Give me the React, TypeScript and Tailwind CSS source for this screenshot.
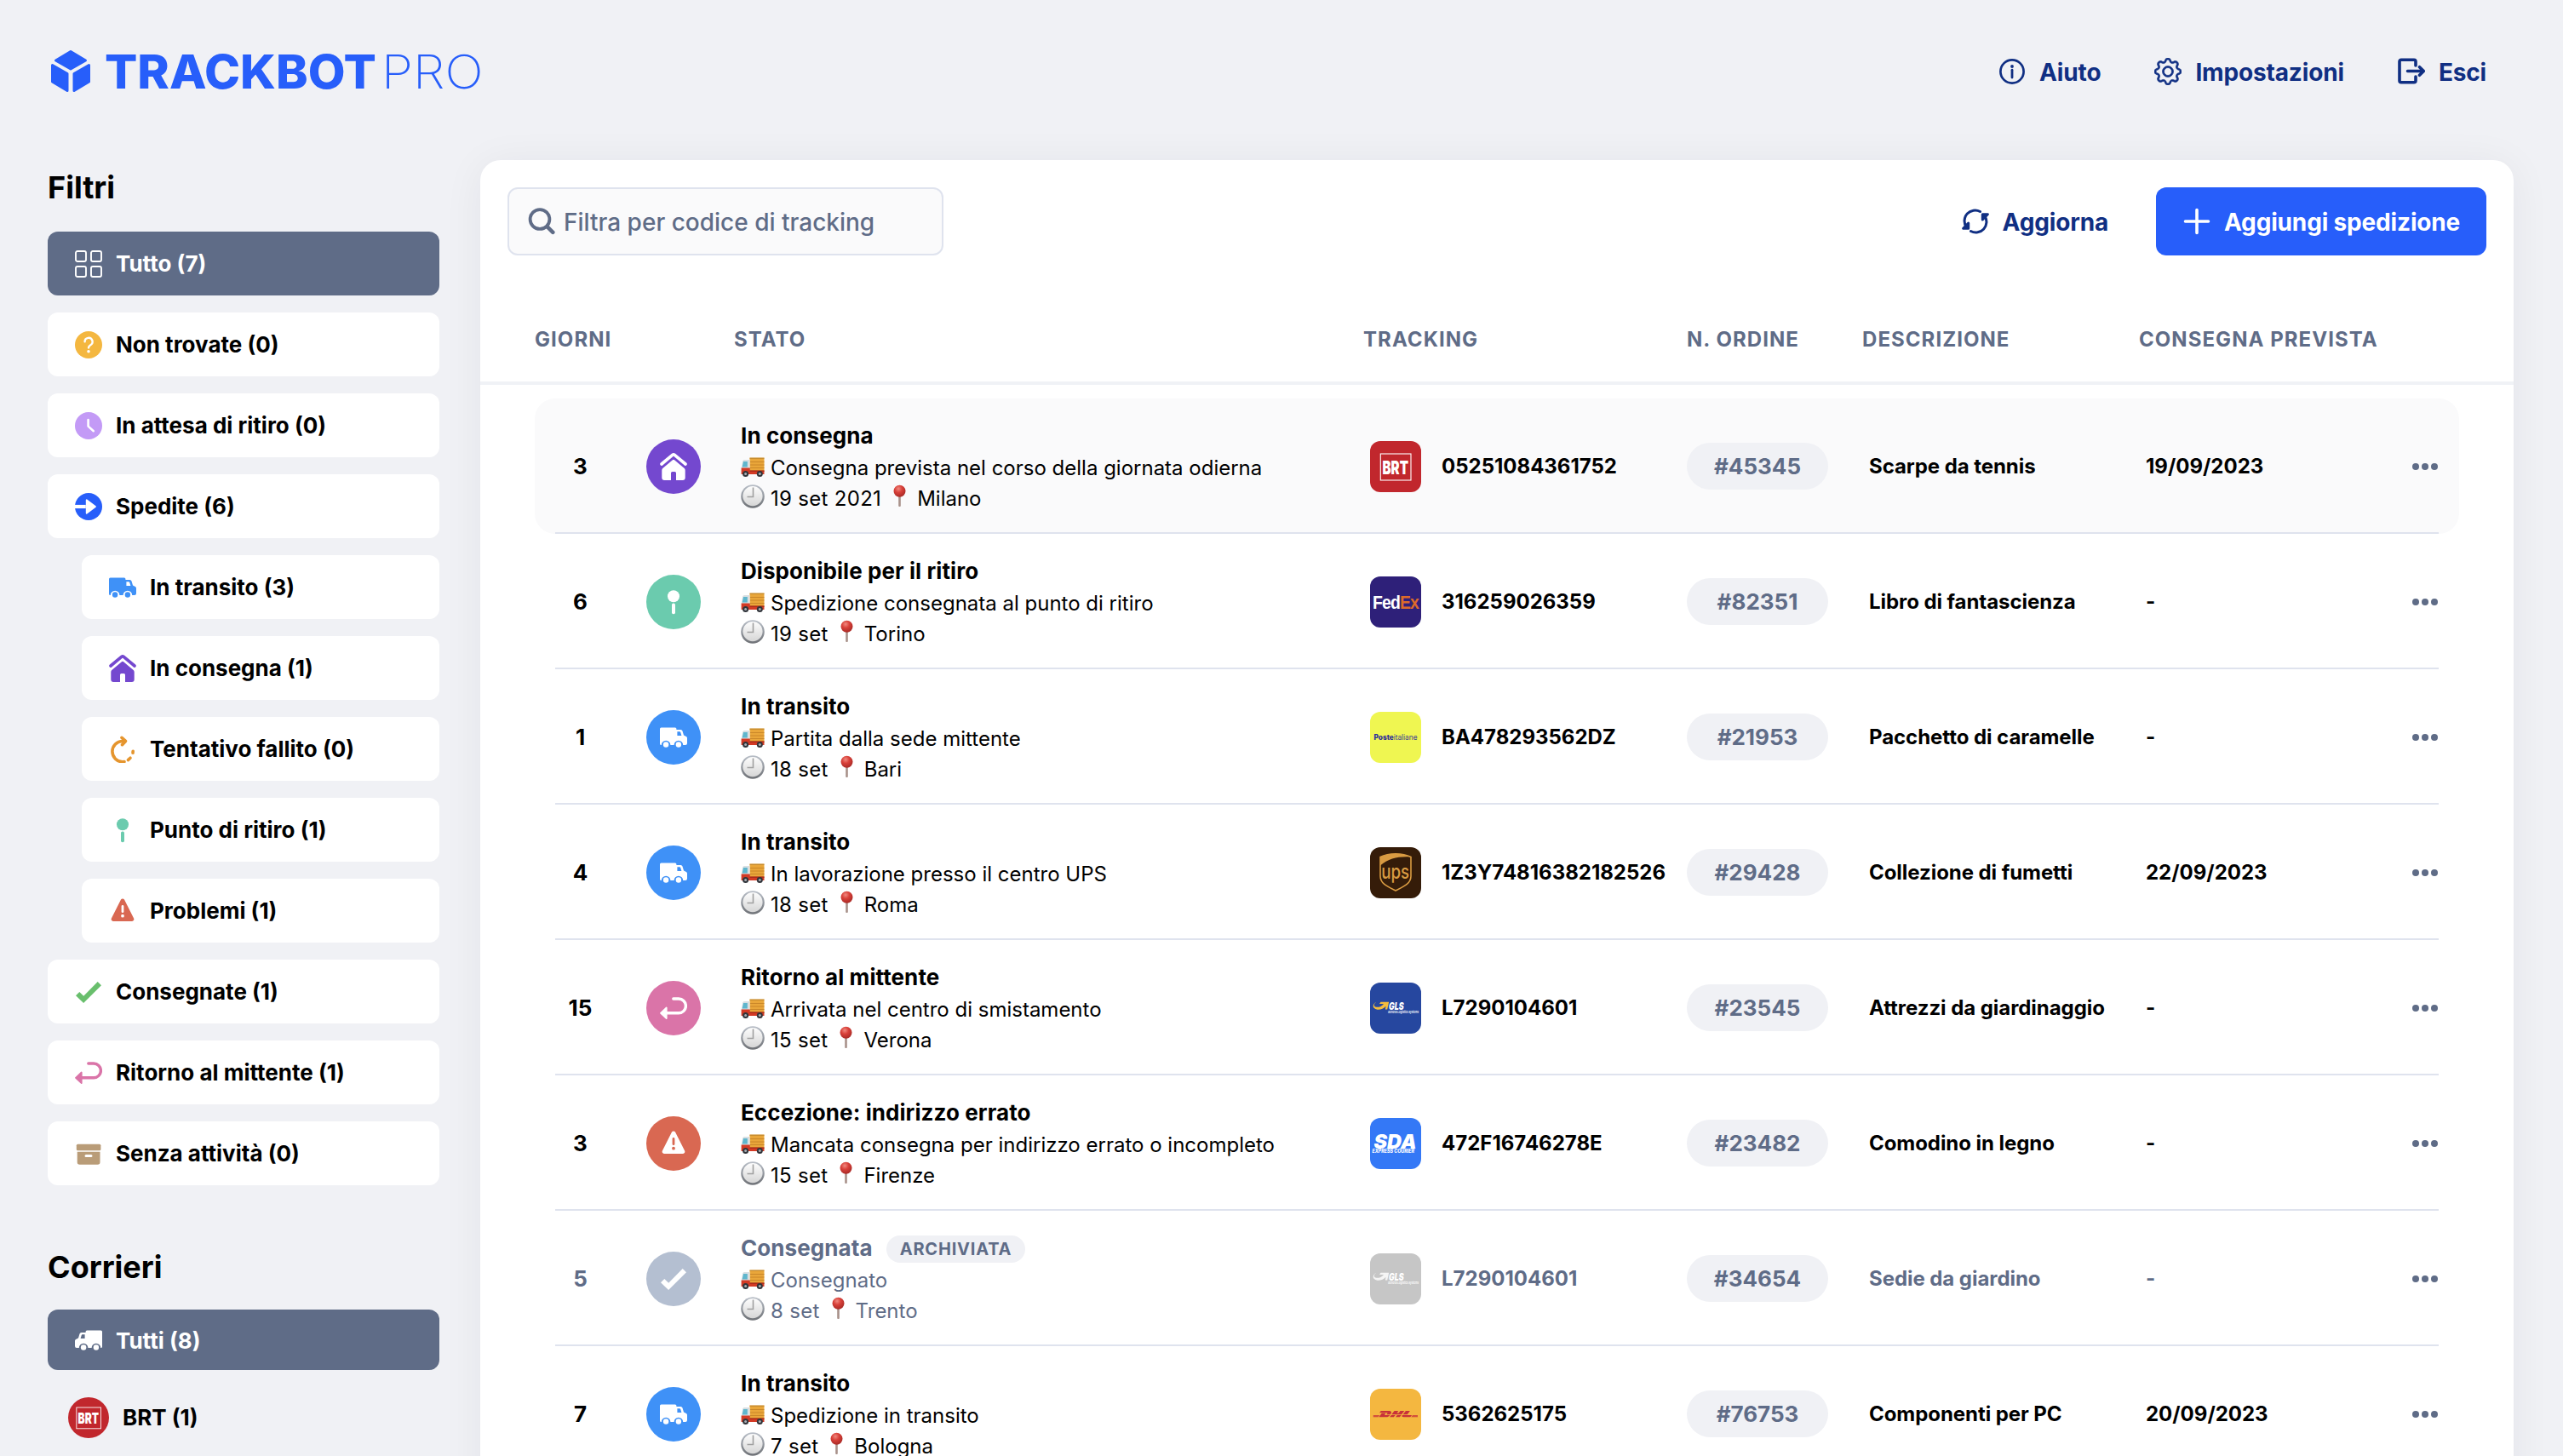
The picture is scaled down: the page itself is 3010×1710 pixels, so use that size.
import React from "react";
import { BsGear } from "react-icons/bs";
import { SiDhl } from "react-icons/si";

interface IconProps {
  className?: string;
}

interface Filtro {
  label: string;
  icon: React.ReactNode;
  active?: boolean;
  nested?: boolean;
}

interface Spedizione {
  giorni: number;
  tipo: "transito" | "consegna" | "ritiro" | "ritorno" | "problema" | "archiviata";
  titolo: string;
  dettaglio: string;
  data: string;
  luogo: string;
  corriere: keyof typeof corrieri;
  tracking: string;
  ordine: string;
  descrizione: string;
  prevista: string;
}

/* ---------- Icone stato ---------- */

const TruckIcon = ({ className = "" }: IconProps) => (
  <svg viewBox="0 0 32 32" className={`w-8 h-8 shrink-0 ${className}`} fill="currentColor">
    <path
      fillRule="evenodd"
      d="M1.5 4.4h16.4a1.5 1.5 0 0 1 1.5 1.5V7h5a2.2 2.2 0 0 1 2.1 1.6l1.5 5 2.9 1.5A2 2 0 0 1 32 16.9V23a2 2 0 0 1-2 2h-2.8a5.3 5.3 0 0 0-10.6 0h-4.2a5.3 5.3 0 0 0-10.6 0H1.5A1.5 1.5 0 0 1 0 23.5V5.9a1.5 1.5 0 0 1 1.5-1.5zM20.4 9.2v4.7h5l-1.2-4a1 1 0 0 0-1-.7z"
    />
    <circle cx="7.1" cy="24.5" r="3.2" />
    <circle cx="21.9" cy="24.5" r="3.2" />
  </svg>
);

const HouseIcon = ({ className = "" }: IconProps) => (
  <svg viewBox="0 0 32 32" className={`w-8 h-8 shrink-0 ${className}`} fill="currentColor">
    <path
      d="M2 13 15 2.2a1.7 1.7 0 0 1 2 0L30 13"
      fill="none"
      stroke="currentColor"
      strokeWidth="3.6"
      strokeLinecap="round"
      strokeLinejoin="round"
    />
    <path d="M14.9 8.2a1.7 1.7 0 0 1 2.2 0l11.6 9.9a3 3 0 0 1 1 2.3V29a3 3 0 0 1-3 3H19v-8.5a1.5 1.5 0 0 0-1.5-1.5h-3a1.5 1.5 0 0 0-1.5 1.5V32H5.3a3 3 0 0 1-3-3v-8.6a3 3 0 0 1 1-2.3z" />
  </svg>
);

const PinIcon = ({ className = "" }: IconProps) => (
  <svg viewBox="0 0 32 32" className={`w-8 h-8 shrink-0 ${className}`} fill="currentColor">
    <circle cx="16" cy="9.3" r="7" />
    <rect x="14" y="17.5" width="4" height="12.7" rx="1.8" />
  </svg>
);

const WarningIcon = ({ className = "" }: IconProps) => (
  <svg viewBox="0 0 32 32" className={`w-8 h-8 shrink-0 ${className}`} fill="currentColor">
    <path
      fillRule="evenodd"
      d="M14 2.6a2.3 2.3 0 0 1 4 0l11.1 22a2.3 2.3 0 0 1-2 3.4H4.9a2.3 2.3 0 0 1-2-3.4zM14.6 10.5v6.2a1.4 1.4 0 0 0 2.8 0v-6.2a1.4 1.4 0 0 0-2.8 0zM16 19.8a1.9 1.9 0 1 0 0 3.8 1.9 1.9 0 0 0 0-3.8z"
    />
  </svg>
);

const ReturnIcon = ({ className = "" }: IconProps) => (
  <svg viewBox="0 0 32 32" className={`w-8 h-8 shrink-0 ${className}`} fill="none">
    <path d="M15.8 5H22a8.4 8.4 0 0 1 0 16.8H7" stroke="currentColor" strokeWidth="3.4" strokeLinecap="round" />
    <path d="M1 21.8 7.7 15.5v12.6z" fill="currentColor" stroke="currentColor" strokeWidth="1.8" strokeLinejoin="round" />
  </svg>
);

const CheckIcon = ({ className = "" }: IconProps) => (
  <svg viewBox="0 0 32 32" className={`w-8 h-8 shrink-0 ${className}`} fill="currentColor">
    <path d="M1 20.2 5.3 16l4.9 4.7L26.7 4 31 8.3 10.1 29z" />
  </svg>
);

const GridIcon = () => (
  <svg viewBox="0 0 32 32" className="w-8 h-8 shrink-0" fill="none" stroke="currentColor" strokeWidth="1.9">
    <rect x="1" y="1" width="12" height="12" rx="2" />
    <rect x="19" y="1" width="12" height="12" rx="2" />
    <rect x="1" y="19" width="12" height="12" rx="2" />
    <rect x="19" y="19" width="12" height="12" rx="2" />
  </svg>
);

const QuestionIcon = () => (
  <svg viewBox="0 0 32 32" className="w-8 h-8 shrink-0" fill="none">
    <circle cx="16" cy="16" r="16" fill="#f4b740" />
    <path
      d="M11.6 12.3a4.5 4.5 0 1 1 6.7 3.9c-1.5.9-2.3 1.6-2.3 3.2"
      stroke="#fff"
      strokeWidth="2.4"
      strokeLinecap="round"
    />
    <circle cx="16" cy="23.7" r="1.8" fill="#fff" />
  </svg>
);

const ClockIcon = () => (
  <svg viewBox="0 0 32 32" className="w-8 h-8 shrink-0" fill="none">
    <circle cx="16" cy="16" r="16" fill="#c39af6" />
    <path d="M15.6 9v7.6l6.2 5.6" stroke="#fff" strokeWidth="2.6" strokeLinecap="round" strokeLinejoin="round" />
  </svg>
);

const ArrowCircleIcon = () => (
  <svg viewBox="0 0 32 32" className="w-8 h-8 shrink-0" fill="none">
    <circle cx="16" cy="16" r="16" fill="#275efa" />
    <path d="M0 13.9h12.8v4.2H0z" fill="#fff" />
    <path d="M13.7 8.2v15.6L24 16z" fill="#fff" stroke="#fff" strokeWidth="1.8" strokeLinejoin="round" />
  </svg>
);

const RetryIcon = () => (
  <svg viewBox="0 0 32 32" className="w-8 h-8 shrink-0" fill="none" stroke="#e5952e" strokeWidth="3.6" strokeLinecap="round" strokeLinejoin="round">
    <path d="M19 6.5h-3a12.1 12.1 0 0 0 0 24.2l2-.2" />
    <path d="M15 2.3 19.5 6.4 15.5 10.7" />
    <path d="M22.4 28.6 25 26.2M28 20.2l.2-2" />
  </svg>
);

const BoxIcon = () => (
  <svg viewBox="0 0 32 32" className="w-8 h-8 shrink-0" fill="#b99c78">
    <rect x="1.8" y="4.8" width="28.6" height="7.5" rx="1.5" />
    <path fillRule="evenodd" d="M2.7 13.7h26.8V26a2.8 2.8 0 0 1-2.8 2.8H5.5A2.8 2.8 0 0 1 2.7 26zM13 17.1a1.5 1.5 0 0 0 0 3h6a1.5 1.5 0 0 0 0-3z" />
  </svg>
);

/* ---------- Icone barra superiore ---------- */

const InfoIcon = () => (
  <svg viewBox="0 0 32 32" className="w-8 h-8 shrink-0" fill="none" stroke="currentColor">
    <circle cx="16" cy="16" r="13.6" strokeWidth="2.7" />
    <path d="M16 14.2V23" strokeWidth="2.8" strokeLinecap="round" />
    <circle cx="16" cy="10" r="1.9" fill="currentColor" stroke="none" />
  </svg>
);

const ExitIcon = () => (
  <svg viewBox="0 0 32 32" className="w-8 h-8 shrink-0" fill="none" stroke="currentColor" strokeWidth="3.6" strokeLinecap="round" strokeLinejoin="round">
    <path d="M21 9V4.2a2 2 0 0 0-2-2H4a2 2 0 0 0-2 2v22.6a2 2 0 0 0 2 2h15a2 2 0 0 0 2-2V22" />
    <path d="M11.5 15.5h18M25.5 10.7l4.8 4.8-4.8 4.8" />
  </svg>
);

const RefreshIcon = () => (
  <svg viewBox="0 0 32 32" className="w-8 h-8 shrink-0" fill="none" stroke="currentColor" strokeWidth="3" strokeLinecap="round" strokeLinejoin="round">
    <path d="M5.2 22.5A12.5 12.5 0 0 1 21.5 4.5" />
    <path d="M1.7 24.3h6V18z" fill="currentColor" />
    <path d="M26.8 9.5A12.5 12.5 0 0 1 10.5 27.5" />
    <path d="M30.3 7.7h-6V14z" fill="currentColor" />
  </svg>
);

const PlusIcon = () => (
  <svg viewBox="0 0 32 32" className="w-8 h-8 shrink-0" fill="none" stroke="currentColor" strokeWidth="3.6" strokeLinecap="round">
    <path d="M16 2.5v27M2.5 16h27" />
  </svg>
);

const SearchIcon = () => (
  <svg viewBox="0 0 32 32" className="w-8 h-8 shrink-0" fill="none" stroke="#5f6c87" strokeLinecap="round">
    <circle cx="14" cy="13.5" r="11.4" strokeWidth="3.8" />
    <path d="m22.8 22.3 6.5 6.5" strokeWidth="4.6" />
  </svg>
);

/* ---------- Emoji ---------- */

const EmojiTruck = () => (
  <svg viewBox="0 0 28 24" className="w-7 h-6 shrink-0">
    <rect x="10.5" y=".6" width="17" height="16" fill="#e9a63a" />
    <path d="M10.5 1.2h17" stroke="#b9832c" strokeWidth="1" />
    <path d="M11 5.5h16.5M11 9h16.5M11 12.5h16.5" stroke="#c27f24" strokeWidth=".8" />
    <path d="M2.2 4.5A2 2 0 0 1 4 3h6.5v10H.8z" fill="#d9dfe2" />
    <path d="M3 5h4.8v6.5H1.6z" fill="#5fb6cd" />
    <path d="M.6 12.5h10.2v3.3h16.7V20H.6z" fill="#d33a25" />
    <path d="M10.5 15.5h17v1.2h-17z" fill="#9d2517" />
    <circle cx="5.6" cy="19.6" r="3.5" fill="#30343a" />
    <circle cx="5.6" cy="19.6" r="1.5" fill="#a9adb3" />
    <circle cx="22.3" cy="19.6" r="3.5" fill="#30343a" />
    <circle cx="22.3" cy="19.6" r="1.5" fill="#a9adb3" />
  </svg>
);

const EmojiClock = () => (
  <svg viewBox="0 0 28 28" className="w-7 h-7 shrink-0">
    <defs>
      <linearGradient id="bordoOrologio" x1="0" y1="0" x2="0" y2="1">
        <stop offset="0" stopColor="#b9bfc8" />
        <stop offset="1" stopColor="#6d7075" />
      </linearGradient>
      <linearGradient id="quadranteOrologio" x1="0" y1="0" x2="0" y2="1">
        <stop offset="0" stopColor="#fdfdfd" />
        <stop offset="1" stopColor="#d6d6d6" />
      </linearGradient>
    </defs>
    <circle cx="14" cy="14" r="13.8" fill="url(#bordoOrologio)" />
    <circle cx="14" cy="13.6" r="11.6" fill="url(#quadranteOrologio)" />
    <path d="M14.5 3.5v11h-7" fill="none" stroke="#a0a0a0" strokeWidth="1.6" />
  </svg>
);

const EmojiPin = () => (
  <svg viewBox="0 0 28 28" className="w-7 h-7 shrink-0">
    <defs>
      <radialGradient id="testaSpillo" cx=".4" cy=".3" r=".7">
        <stop offset="0" stopColor="#f08a80" />
        <stop offset=".45" stopColor="#d9413a" />
        <stop offset="1" stopColor="#a92a26" />
      </radialGradient>
    </defs>
    <rect x="13.2" y="12" width="2.6" height="14" rx="1" fill="#a8918a" />
    <circle cx="14.5" cy="7.8" r="7" fill="url(#testaSpillo)" />
  </svg>
);

/* ---------- Loghi corrieri ---------- */

const BrtMark = () => (
  <>
    <rect width="60" height="60" fill="#c1272d" />
    <rect x="12.3" y="15" width="35.7" height="31" fill="none" stroke="#fff" strokeWidth="1.1" />
    <text x="14.5" y="38.6" fontFamily="Inter, sans-serif" fontWeight="900" fontSize="22" fill="#fff" textLength="30.5" lengthAdjust="spacingAndGlyphs">
      BRT
    </text>
  </>
);

const FedexMark = () => (
  <>
    <rect width="60" height="60" fill="#2e2079" />
    <text x="3" y="37.6" fontFamily="Liberation Sans, sans-serif" fontWeight="700" fontSize="22.5" letterSpacing="-1" fill="#fff" textLength="54" lengthAdjust="spacingAndGlyphs">
      Fed<tspan fill="#dd6a2b">Ex</tspan>
    </text>
  </>
);

const PosteMark = () => (
  <>
    <rect width="60" height="60" fill="#eff651" />
    <text x="4.5" y="33" fontFamily="Inter, sans-serif" fontWeight="800" fontSize="8.5" fill="#2a2a9c" textLength="51" lengthAdjust="spacingAndGlyphs">
      Poste<tspan fontWeight="400" fill="#3c3c96">italiane</tspan>
    </text>
  </>
);

const UpsMark = () => (
  <>
    <rect width="60" height="60" fill="#351c09" />
    <path d="M12 11.5C22 6.5 38 6.5 48 11.5V34c0 9-9 12.500-18 17-9-4.500-18-8-18-17z" fill="none" stroke="#d99b42" strokeWidth="1.6" />
    <path d="M12 11.5C22 6.5 38 6.5 48 11.5 34 10.500 22 13 12 21.500z" fill="#d99b42" />
    <text x="13.2" y="37.3" fontFamily="Inter, sans-serif" fontWeight="500" fontSize="24" fill="#d99b42" textLength="33" lengthAdjust="spacingAndGlyphs">
      ups
    </text>
  </>
);

const GlsMark = ({ bg = "#26479f", accent = "#f4bd3e" }: { bg?: string; accent?: string }) => (
  <>
    <rect width="60" height="60" fill={bg} />
    <path d="M7.5 22.800C2.500 25 2 30.500 8.500 31.700c4 .4 7.500-1.400 10-4l-.6 3.800h2.300l2-8.700h-9.700l-1.500 2.100h5c-2.200 2.700-5.500 4.300-8.500 3.900-3.600-.6-3.500-3.700 0-6z" fill={accent} />
    <text x="22" y="31.8" fontFamily="Inter, sans-serif" fontWeight="900" fontStyle="italic" fontSize="12" fill="#fff" textLength="17.5" lengthAdjust="spacingAndGlyphs">
      GLS
    </text>
    <text x="21" y="36" fontFamily="Inter, sans-serif" fontWeight="600" fontStyle="italic" fontSize="4" fill="#fff" textLength="36" lengthAdjust="spacingAndGlyphs">
      General Logistics Systems
    </text>
  </>
);

const SdaMark = () => (
  <>
    <rect width="60" height="60" fill="#3478f6" />
    <text x="4.5" y="36" fontFamily="Inter, sans-serif" fontWeight="900" fontStyle="italic" fontSize="23.5" fill="#fff" textLength="50" lengthAdjust="spacingAndGlyphs">
      SDA
    </text>
    <text x="2.5" y="41.3" fontFamily="Inter, sans-serif" fontWeight="800" fontStyle="italic" fontSize="5.6" fill="#fff" textLength="49.5" lengthAdjust="spacingAndGlyphs">
      EXPRESS COURIER
    </text>
  </>
);

const DhlMark = () => (
  <>
    <rect width="60" height="60" fill="#f4b740" />
    <g transform="translate(3.5 3.4)">
      <SiDhl size={52.5} color="#c8313a" />
    </g>
  </>
);

const corrieri = {
  brt: <BrtMark />,
  fedex: <FedexMark />,
  poste: <PosteMark />,
  ups: <UpsMark />,
  gls: <GlsMark />,
  glsGrigio: <GlsMark bg="#c6c6c6" accent="#f5f5f5" />,
  sda: <SdaMark />,
  dhl: <DhlMark />,
};

/* ---------- Dati ---------- */

const filtri: Filtro[] = [
  { label: "Tutto (7)", icon: <GridIcon />, active: true },
  { label: "Non trovate (0)", icon: <QuestionIcon /> },
  { label: "In attesa di ritiro (0)", icon: <ClockIcon /> },
  { label: "Spedite (6)", icon: <ArrowCircleIcon /> },
  { label: "In transito (3)", icon: <TruckIcon className="text-[#3f91f7]" />, nested: true },
  { label: "In consegna (1)", icon: <HouseIcon className="text-[#7448cf]" />, nested: true },
  { label: "Tentativo fallito (0)", icon: <RetryIcon />, nested: true },
  { label: "Punto di ritiro (1)", icon: <PinIcon className="text-[#6bcbae]" />, nested: true },
  { label: "Problemi (1)", icon: <WarningIcon className="text-[#d96852]" />, nested: true },
  { label: "Consegnate (1)", icon: <CheckIcon className="text-[#69bf6d]" /> },
  { label: "Ritorno al mittente (1)", icon: <ReturnIcon className="text-[#da74a8]" /> },
  { label: "Senza attività (0)", icon: <BoxIcon /> },
];

const statoStile = {
  transito: { bg: "bg-[#3f91f7]", icon: <TruckIcon /> },
  consegna: { bg: "bg-[#7448cf]", icon: <HouseIcon /> },
  ritiro: { bg: "bg-[#6bcbae]", icon: <PinIcon /> },
  ritorno: { bg: "bg-[#da74a8]", icon: <ReturnIcon /> },
  problema: { bg: "bg-[#d96852]", icon: <WarningIcon /> },
  archiviata: { bg: "bg-[#b4bfd1]", icon: <CheckIcon /> },
};

const spedizioni: Spedizione[] = [
  { giorni: 3, tipo: "consegna", titolo: "In consegna", dettaglio: "Consegna prevista nel corso della giornata odierna", data: "19 set 2021", luogo: "Milano", corriere: "brt", tracking: "05251084361752", ordine: "#45345", descrizione: "Scarpe da tennis", prevista: "19/09/2023" },
  { giorni: 6, tipo: "ritiro", titolo: "Disponibile per il ritiro", dettaglio: "Spedizione consegnata al punto di ritiro", data: "19 set", luogo: "Torino", corriere: "fedex", tracking: "316259026359", ordine: "#82351", descrizione: "Libro di fantascienza", prevista: "-" },
  { giorni: 1, tipo: "transito", titolo: "In transito", dettaglio: "Partita dalla sede mittente", data: "18 set", luogo: "Bari", corriere: "poste", tracking: "BA478293562DZ", ordine: "#21953", descrizione: "Pacchetto di caramelle", prevista: "-" },
  { giorni: 4, tipo: "transito", titolo: "In transito", dettaglio: "In lavorazione presso il centro UPS", data: "18 set", luogo: "Roma", corriere: "ups", tracking: "1Z3Y74816382182526", ordine: "#29428", descrizione: "Collezione di fumetti", prevista: "22/09/2023" },
  { giorni: 15, tipo: "ritorno", titolo: "Ritorno al mittente", dettaglio: "Arrivata nel centro di smistamento", data: "15 set", luogo: "Verona", corriere: "gls", tracking: "L7290104601", ordine: "#23545", descrizione: "Attrezzi da giardinaggio", prevista: "-" },
  { giorni: 3, tipo: "problema", titolo: "Eccezione: indirizzo errato", dettaglio: "Mancata consegna per indirizzo errato o incompleto", data: "15 set", luogo: "Firenze", corriere: "sda", tracking: "472F16746278E", ordine: "#23482", descrizione: "Comodino in legno", prevista: "-" },
  { giorni: 5, tipo: "archiviata", titolo: "Consegnata", dettaglio: "Consegnato", data: "8 set", luogo: "Trento", corriere: "glsGrigio", tracking: "L7290104601", ordine: "#34654", descrizione: "Sedie da giardino", prevista: "-" },
  { giorni: 7, tipo: "transito", titolo: "In transito", dettaglio: "Spedizione in transito", data: "7 set", luogo: "Bologna", corriere: "dhl", tracking: "5362625175", ordine: "#76753", descrizione: "Componenti per PC", prevista: "20/09/2023" },
];

/* ---------- Componenti ---------- */

function Logo() {
  return (
    <svg viewBox="0 0 510 70" className="w-[510px] h-[70px]" fill="#275efa" role="img" aria-label="Trackbot Pro">
      <g stroke="#275efa" strokeWidth="3" strokeLinejoin="round">
        <path d="M23 11.500 40.500 22 23 32 5.500 22z" />
        <path d="M1.500 27.500 19 37.500v20L1.500 47z" />
        <path d="M44.500 27.500 27 37.500v20L44.500 47z" />
      </g>
      <text x="63" y="54.5" fontFamily="Inter, sans-serif" fontWeight="850" fontSize="55" textLength="319" lengthAdjust="spacingAndGlyphs">
        TRACKBOT
      </text>
      <text x="388" y="54.5" fontFamily="Inter, sans-serif" fontWeight="250" fontSize="55" textLength="119.5" lengthAdjust="spacingAndGlyphs">
        PRO
      </text>
    </svg>
  );
}

function FiltroItem({ label, icon, active, nested }: Filtro) {
  return (
    <div
      className={`h-[75px] flex items-center gap-4 px-8 rounded-xl text-[26px] font-[650] ${
        active ? "bg-[#5f6c87] text-white" : "bg-white text-black"
      } ${nested ? "ml-10" : ""}`}
    >
      {icon}
      <span>{label}</span>
    </div>
  );
}

function RigaSpedizione({ s, evidenziata }: { s: Spedizione; evidenziata: boolean }) {
  const stato = statoStile[s.tipo];
  const archiviata = s.tipo === "archiviata";

  return (
    <div className={`relative h-[159px] grid grid-cols-[107px_135px_739px_372px_214px_325px_240px_1fr] items-center rounded-3xl text-[24px] font-[650] ${evidenziata ? "bg-[#fafafb]" : ""} ${archiviata ? "text-[#5f6c87]" : "text-black"}`}>
      <span className="text-center text-[26px]">{s.giorni}</span>
      <div className={`ml-6 w-16 h-16 rounded-full flex items-center justify-center text-white ${stato.bg}`}>{stato.icon}</div>

      <div className="flex flex-col">
        <div className="h-[38px] flex items-center gap-4">
          <span className="text-[26px] font-bold tracking-[0.08px]">{s.titolo}</span>
          {archiviata && (
            <span className="mt-0.5 h-8 px-4 flex items-center rounded-full bg-[#f0f1f5] text-[20px] tracking-[0.8px]">
              ARCHIVIATA
            </span>
          )}
        </div>
        <div className="h-9 flex items-center gap-[7px] font-normal">
          <EmojiTruck />
          <span className="mt-0.5">{s.dettaglio}</span>
        </div>
        <div className="h-9 flex items-center gap-[7px] font-normal">
          <div className="pb-1"><EmojiClock /></div>
          <span className="mt-0.5 tracking-[0.3px]">{s.data}</span>
          <div className="pb-1"><EmojiPin /></div>
          <span className="mt-0.5">{s.luogo}</span>
        </div>
      </div>

      <div className="flex items-center gap-6">
        <svg viewBox="0 0 60 60" className="w-[60px] h-[60px] rounded-xl shrink-0">{corrieri[s.corriere]}</svg>
        <span>{s.tracking}</span>
      </div>
      <div className="w-[166px] h-[55px] rounded-full bg-[#f0f1f5] text-[#5f6c87] text-[26px] flex items-center justify-center">
        {s.ordine}
      </div>
      <span className="tracking-[-0.06px]">{s.descrizione}</span>
      <span>{s.prevista}</span>
      <div className="flex justify-end gap-[3px] pr-[25px]">
        <span className="w-2 h-2 rounded-full bg-[#5f6c87]" />
        <span className="w-2 h-2 rounded-full bg-[#5f6c87]" />
        <span className="w-2 h-2 rounded-full bg-[#5f6c87]" />
      </div>

      {/* Linea separatrice */}
      <div className="absolute left-6 right-6 bottom-0 h-[2px] bg-[#dfe3ee]" />
    </div>
  );
}

export default function App() {
  return (
    <div className="w-[3010px] h-[1710px] overflow-hidden bg-[#f0f1f5] font-['Inter',sans-serif] text-black">
      <header className="h-[168px] pl-[60px] pr-[90px] flex items-center justify-between">
        <Logo />
        <nav className="flex items-center gap-[63px] text-[28px] font-[650] tracking-[-0.16px] text-[#102f83]">
          <a className="flex items-center gap-4"><InfoIcon /><span className="mt-0.5">Aiuto</span></a>
          <a className="flex items-center gap-4"><BsGear size={32} stroke="currentColor" strokeWidth=".35" /><span className="mt-0.5">Impostazioni</span></a>
          <a className="flex items-center gap-4"><ExitIcon /><span className="mt-0.5">Esci</span></a>
        </nav>
      </header>

      <div className="flex">
        <aside className="w-[564px] pl-14 pr-12 shrink-0">
          <h2 className="h-[104px] flex items-center text-[36px] font-bold">Filtri</h2>
          <div className="flex flex-col gap-5">
            {filtri.map((f) => (
              <FiltroItem key={f.label} {...f} />
            ))}
          </div>

          <h2 className="mt-[45px] h-[101px] flex items-center text-[36px] font-bold">Corrieri</h2>
          <div className="h-[71px] flex items-center gap-4 px-8 rounded-xl bg-[#5f6c87] text-white text-[26px] font-[650]">
            <TruckIcon className="-scale-x-100" />
            <span className="mt-0.5">Tutti (8)</span>
          </div>
          <div className="mt-5 h-[71px] flex items-center gap-4 px-6 text-[26px] font-[650]">
            <svg viewBox="0 0 60 60" className="w-12 h-12 rounded-full shrink-0"><BrtMark /></svg>
            <span>BRT (1)</span>
          </div>
        </aside>

        <main className="mt-5 w-[2388px] h-[1600px] rounded-t-3xl bg-white shadow-[0_4px_48px_rgba(20,25,50,0.06)]">
          <div className="px-8 pt-8 flex items-center justify-between">
            <div className="w-[512px] h-20 px-[22px] flex items-center gap-[10px] rounded-xl border-2 border-[#dfe3ee] bg-[#fafafb]">
              <SearchIcon />
              <span className="mt-0.5 text-[28px] font-medium text-[#5f6c87]">Filtra per codice di tracking</span>
            </div>
            <div className="flex items-center gap-14 text-[28px] font-[650] tracking-[-0.16px]">
              <button className="flex items-center gap-4 text-[#102f83]"><RefreshIcon /><span className="mt-0.5">Aggiorna</span></button>
              <button className="h-20 w-[388px] flex items-center gap-4 px-8 whitespace-nowrap rounded-xl bg-[#275efa] text-white">
                <PlusIcon />
                <span className="mt-0.5">Aggiungi spedizione</span>
              </button>
            </div>
          </div>

          {/* Intestazione tabella */}
          <div className="mt-[50px] h-[102px] px-16 grid grid-cols-[234px_739px_380px_206px_325px_1fr] items-center border-b-4 border-[#f0f2f6] text-[24px] font-[650] tracking-[1.05px] text-[#5f6c87]">
            <span>GIORNI</span>
            <span>STATO</span>
            <span>TRACKING</span>
            <span>N. ORDINE</span>
            <span>DESCRIZIONE</span>
            <span>CONSEGNA PREVISTA</span>
          </div>

          <div className="mt-4 px-16">
            {spedizioni.map((s, i) => (
              <RigaSpedizione key={s.ordine} s={s} evidenziata={i === 0} />
            ))}
          </div>
        </main>
      </div>
    </div>
  );
}
